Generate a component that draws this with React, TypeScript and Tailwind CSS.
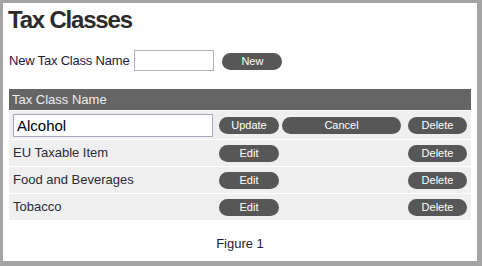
import React from "react";

const font = { fontFamily: '"Liberation Sans", Arial, sans-serif' };

const Pill: React.FC<{ label: string; w: string; className?: string }> = ({ label, w, className = "" }) => (
    <button className={`${w} ${className} block h-[17px] rounded-full bg-[#575757] text-[11px] leading-[16px] text-white text-center`}>
        {label}
    </button>
);

const rows = ["EU Taxable Item", "Food and Beverages", "Tobacco"];

export default function App() {
    return (
        <div style={font} className="w-[482px] h-[266px] bg-white border-t-[3px] border-l-[3px] border-r-[5px] border-b-[5px] border-[#a3a3a3] text-[#1e1e2e] flex flex-col">
            <h1 className="text-[24px] font-bold tracking-[-1.2px] text-[#2b2b2b] leading-[29px] pl-[5px] pt-[2px]">Tax Classes</h1>

            <div className="flex items-center pl-[6px] mt-[16px] h-[21px]">
                <span className="text-[13px] tracking-[-0.2px] text-[#1b1b3a]">New Tax Class Name</span>
                <input className="ml-[5px] w-[80px] h-[21px] border border-[#b0b0b8] bg-white" />
                <Pill label="New" w="w-[60px]" className="ml-[8px] mt-[1px]" />
            </div>

            <div className="ml-[6px] w-[462px] mt-[18px] flex flex-col gap-[1px]">
                <div className="h-[21px] bg-[#656565] text-[13px] text-[#eeeeee] pl-[3px] leading-[21px]">Tax Class Name</div>
                <div className="h-[28px] bg-[#efefef] flex items-center">
                    <div className="w-[210px] pl-[4px] flex">
                        <input
                            defaultValue="Alcohol"
                            className="w-[200px] h-[23px] border border-[#a8a8b8] bg-white text-[15px] text-black px-[3px]"
                        />
                    </div>
                    <Pill label="Update" w="w-[60px]" />
                    <Pill label="Cancel" w="w-[119px]" className="ml-[3px]" />
                    <Pill label="Delete" w="w-[59px]" className="ml-[7px]" />
                </div>
                {rows.map(r => (
                    <div key={r} className="h-[26px] bg-[#efefef] flex items-center">
                        <div className="w-[210px] pl-[4px] text-[13px] text-[#2a2a3a]">{r}</div>
                        <Pill label="Edit" w="w-[60px]" />
                        <Pill label="Delete" w="w-[59px]" className="ml-[129px]" />
                    </div>
                ))}
            </div>

            <div className="text-center text-[13px] text-[#1b1b3a] mt-[14px]">Figure 1</div>
        </div>
    );
}
